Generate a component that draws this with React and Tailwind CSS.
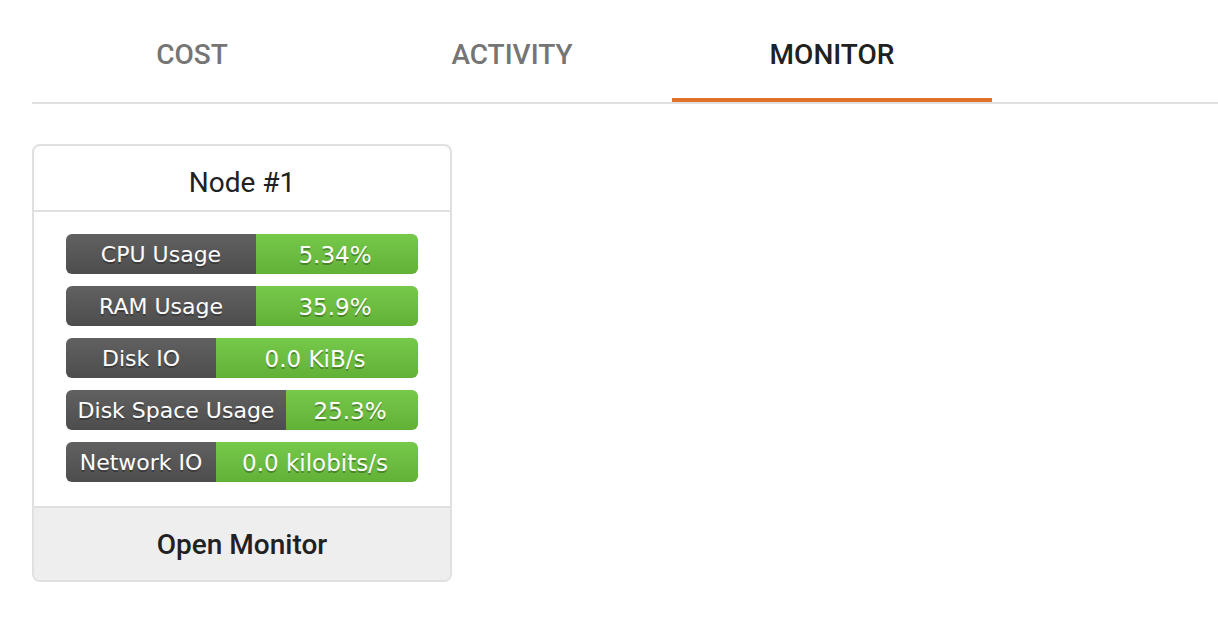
const tabs = ["COST", "ACTIVITY", "MONITOR"];

const metrics = [
  { label: "CPU Usage", value: "5.34%", width: "w-[190px]" },
  { label: "RAM Usage", value: "35.9%", width: "w-[190px]" },
  { label: "Disk IO", value: "0.0 KiB/s", width: "w-[150px]" },
  { label: "Disk Space Usage", value: "25.3%", width: "w-[220px]" },
  { label: "Network IO", value: "0.0 kilobits/s", width: "w-[150px]" },
];

function Badge({ label, value, width }) {
  return (
    <div className="flex h-10 overflow-hidden rounded-[6px] font-['DejaVu_Sans',sans-serif] text-[22px] leading-[42px] text-white [text-shadow:0_2px_0_rgba(1,1,1,0.3)]">
      <dt className={`${width} h-10 shrink-0 whitespace-nowrap bg-linear-to-b from-[#616161] to-[#4d4d4d] text-center`}>{label}</dt>
      <dd className="h-10 flex-1 whitespace-nowrap bg-linear-to-b from-[#76c94b] to-[#61b136] pr-1 text-center text-[23px]">{value}</dd>
    </div>
  );
}

export default function App() {
  return (
    <main className="min-h-screen bg-white pl-8 font-[Roboto,sans-serif] text-[#212121]">
      <div role="tablist" className="flex border-b-2 border-[#e0e0e0]">
        {tabs.map((tab) => {
          const active = tab === "MONITOR";
          return (
            <button
              key={tab}
              type="button"
              role="tab"
              aria-selected={active}
              className={`h-[102px] w-80 border-b-4 pt-4 pb-1 text-[28px] leading-8 font-medium ${active ? "border-[#e07128] text-[#212121]" : "border-transparent text-[#757575]"}`}
            >
              {tab}
            </button>
          );
        })}
      </div>
      <section className="mt-10 w-[420px] overflow-hidden rounded-lg border-2 border-[#e0e0e0]">
        <h2 className="border-b-2 border-[#e0e0e0] pt-[21px] pb-[11px] text-center text-[28px] leading-8">Node #1</h2>
        <dl className="flex flex-col gap-3 px-8 pt-[22px] pb-6">
          {metrics.map((metric) => (
            <Badge key={metric.label} {...metric} />
          ))}
        </dl>
        <button type="button" className="h-[74px] w-full border-t-2 border-[#e0e0e0] bg-[#eeeeee] pt-0.5 text-[28px] font-medium">
          Open Monitor
        </button>
      </section>
    </main>
  );
}
